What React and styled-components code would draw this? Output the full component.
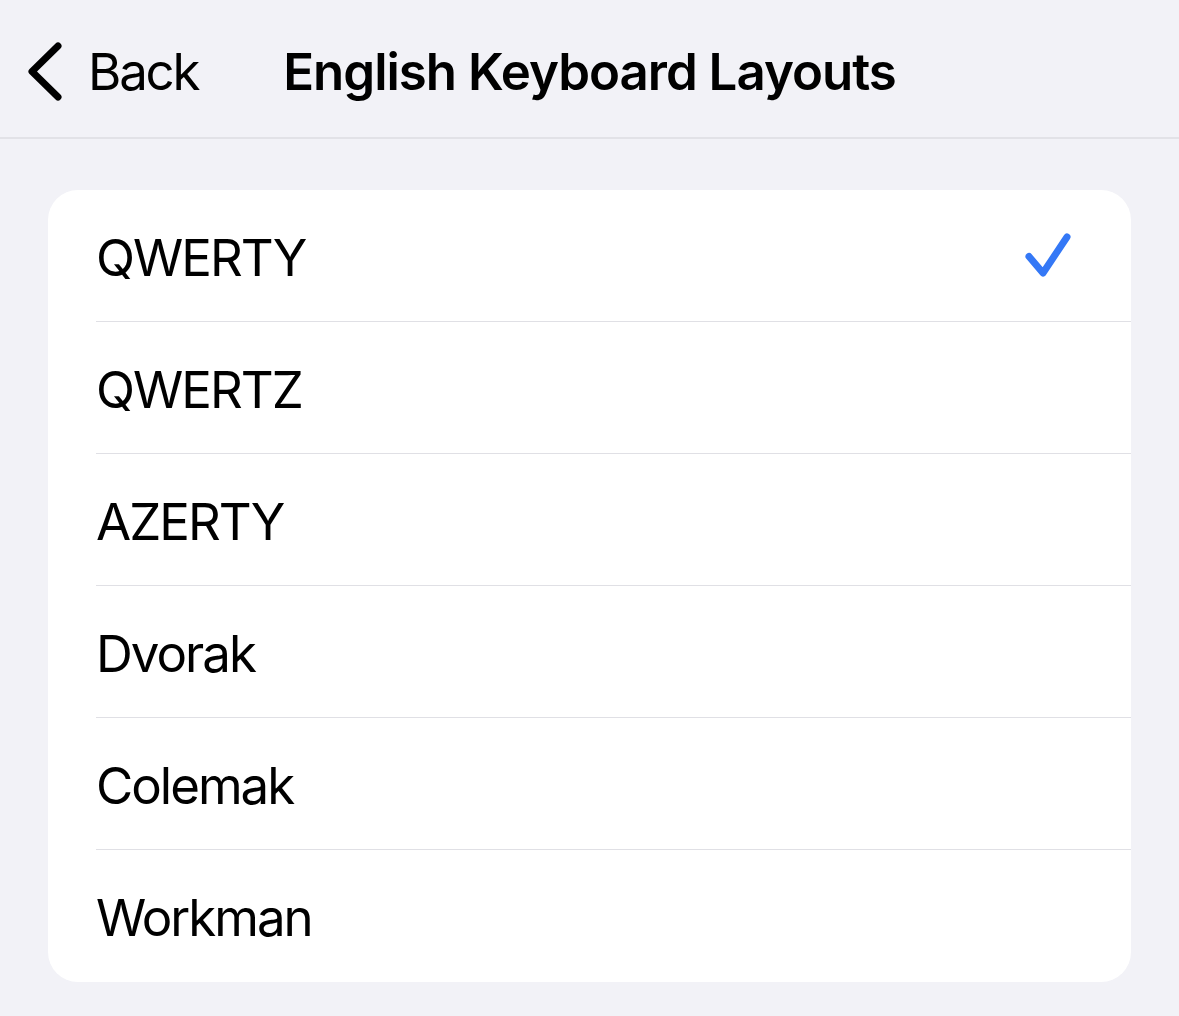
import React from "react";
import styled, { createGlobalStyle } from "styled-components";

const layouts = ["QWERTY", "QWERTZ", "AZERTY", "Dvorak", "Colemak", "Workman"];

export default function App() {
  const selected = "QWERTY";

  return (
    <>
      <GlobalStyle />
      <Page>
        <NavBar>
          <BackButton type="button">
            <svg width="40" height="60" viewBox="0 0 40 60">
              <polyline
                points="30,4 4,29.5 30,55"
                fill="none"
                stroke="#000"
                strokeWidth="7"
                strokeLinecap="round"
                strokeLinejoin="round"
              />
            </svg>
            <span>Back</span>
          </BackButton>
          <Title>English Keyboard Layouts</Title>
          <div />
        </NavBar>

        <Card>
          {layouts.map((name) => (
            <Row key={name}>
              <Label>{name}</Label>
              {name === selected && (
                <svg width="50" height="50" viewBox="0 0 50 50">
                  <polyline
                    points="6,24.5 20,41 44,5"
                    fill="none"
                    stroke="#3478f6"
                    strokeWidth="7"
                    strokeLinecap="round"
                    strokeLinejoin="round"
                  />
                </svg>
              )}
            </Row>
          ))}
        </Card>
      </Page>
    </>
  );
}

const GlobalStyle = createGlobalStyle`
  html, body {
    margin: 0;
    padding: 0;
    background: #f2f2f7;
  }
  body {
    font-family: Inter, "Noto Sans", sans-serif;
    -webkit-font-smoothing: antialiased;
  }
`;

const Page = styled.div`
  width: 1179px;
  height: 1016px;
  background: #f2f2f7;
  overflow: hidden;
`;

const NavBar = styled.header`
  display: grid;
  grid-template-columns: 1fr auto 1fr;
  align-items: center;
  height: 139px;
  padding-top: 6px;
  box-sizing: border-box;
  border-bottom: 2px solid #e2e2e7;
`;

const BackButton = styled.button`
  display: flex;
  align-items: center;
  gap: 20px;
  justify-self: start;
  padding: 0 0 0 28px;
  margin: 0;
  background: transparent;
  border: none;
  color: #000;
  font-family: Inter, sans-serif;
  font-size: 51px;
  font-weight: 400;
  letter-spacing: -2.2px;
`;

const Title = styled.h1`
  margin: 0;
  font-size: 51px;
  font-weight: 600;
  letter-spacing: -1px;
  color: #000;
`;

const Card = styled.section`
  margin: 51px 48px 0;
  background: #fff;
  border-radius: 30px;
  overflow: hidden;
`;

const Row = styled.div`
  display: flex;
  align-items: center;
  justify-content: space-between;
  height: 132px;
  margin-left: 48px;
  padding: 3px 58px 0 0;
  box-sizing: border-box;
  border-bottom: 1px solid #e0e0e5;

  &:last-child {
    border-bottom: none;
  }
`;

const Label = styled.span`
  font-size: 51px;
  font-weight: 400;
  letter-spacing: -2px;
  color: #000;
`;
